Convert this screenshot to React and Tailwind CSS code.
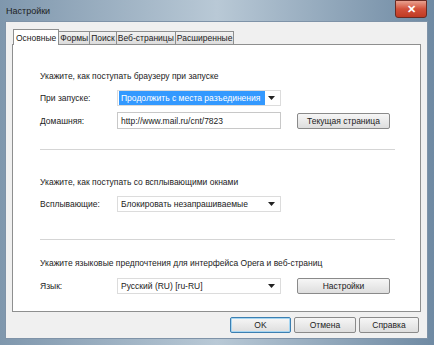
import React from 'react';

const font = { fontFamily: '"Liberation Sans", Arial, sans-serif' };

function Arrow() {
  return (
    <svg width="7" height="4" viewBox="0 0 7 4" className="shrink-0">
      <path d="M0 0 L7 0 L3.5 4 Z" fill="#222" />
    </svg>
  );
}

function Select({ value, highlight }) {
  return (
    <div className="flex h-[16px] w-[164px] items-center border border-[#dcdcdc] bg-white pl-[1px] pr-[5px]">
      <div
        className={
          highlight
            ? 'flex h-[14px] flex-1 items-center whitespace-nowrap bg-[#3399ff] pl-[2px] text-white'
            : 'flex h-[14px] flex-1 items-center whitespace-nowrap pl-[2px] text-[#222]'
        }
      >
        {value}
      </div>
      <div className="ml-[3px]">
        <Arrow />
      </div>
    </div>
  );
}

function Button({ children, w = 'w-[93px]', focused }) {
  return (
    <div
      className={
        'flex h-[16px] items-center justify-center whitespace-nowrap rounded-[2px] border bg-gradient-to-b from-[#f6f6f6] to-[#dedede] text-[#222] ' +
        w +
        (focused ? ' border-[#3c7fb1] shadow-[inset_0_0_0_1px_#a6d6f2]' : ' border-[#8a8a8a]')
      }
    >
      {children}
    </div>
  );
}

function Row({ label, children }) {
  return (
    <div className="flex items-center">
      <div className="w-[77px] whitespace-nowrap text-[#222]">{label}</div>
      {children}
    </div>
  );
}

export default function App() {
  const tabs = ['Основные', 'Формы', 'Поиск', 'Веб-страницы', 'Расширенные'];
  return (
    <div
      className="relative flex h-[345px] w-[434px] flex-col overflow-hidden whitespace-nowrap bg-gradient-to-r from-[#7f97ad] via-[#b9c9d6] to-[#6f8aa3] text-[8.5px] leading-[12px]"
      style={font}
    >
      <div className="flex h-[21px] items-center justify-between pl-[6px]">
        <span className="text-[9px] text-[#1e1e1e]">Настройки</span>
        <div className="mr-[7px] flex h-[18px] w-[32px] items-center justify-center self-start rounded-b-[3px] border border-[#6b2a22] bg-gradient-to-b from-[#e8a08f] via-[#d2503a] to-[#c03a22] text-[11px] font-bold text-white">
          ✕
        </div>
      </div>
      <div className="mx-[5px] mr-[6px] flex h-[318px] flex-col border border-[#7f93a8] bg-[#f0f0f0] px-[6px] pt-[8px]">
        <div className="flex h-[14px] items-end pl-[1px]">
          {tabs.map((t, i) =>
            i === 0 ? (
              <div
                key={t}
                className="relative z-10 -mb-[1px] flex h-[16px] items-center border border-b-0 border-[#8e8f8f] bg-white px-[2px] text-[#222]"
              >
                {t}
              </div>
            ) : (
              <div
                key={t}
                className="flex h-[13px] items-center border border-l-0 border-b-0 border-[#8e8f8f] bg-gradient-to-b from-[#f2f2f2] to-[#dcdcdc] px-[1px] text-[#222]"
              >
                {t}
              </div>
            )
          )}
        </div>
        <div className="flex h-[268px] flex-col border border-[#8e8f8f] bg-white pl-[27px] pr-[25px]">
          <div className="mt-[25px] text-[#222]">Укажите, как поступать браузеру при запуске</div>
          <div className="mt-[8px]">
            <Row label="При запуске:">
              <Select value="Продолжить с места разъединения" highlight />
            </Row>
          </div>
          <div className="mt-[6px]">
            <Row label="Домашняя:">
              <div className="flex h-[17px] w-[164px] items-center border border-[#c8c8c8] bg-white pl-[3px] text-[#222]">
                http://www.mail.ru/cnt/7823
              </div>
              <div className="ml-[16px]">
                <Button>Текущая страница</Button>
              </div>
            </Row>
          </div>
          <div className="mt-[20px] h-px bg-[#d5d5d5]" />
          <div className="mt-[26px] text-[#222]">Укажите, как поступать со всплывающими окнами</div>
          <div className="mt-[8px]">
            <Row label="Всплывающие:">
              <Select value="Блокировать незапрашиваемые" />
            </Row>
          </div>
          <div className="mt-[27px] h-px bg-[#d5d5d5]" />
          <div className="mt-[17px] text-[#222]">Укажите языковые предпочтения для интерфейса Opera и веб-страниц</div>
          <div className="mt-[9px]">
            <Row label="Язык:">
              <Select value="Русский (RU) [ru-RU]" />
              <div className="ml-[16px]">
                <Button>Настройки</Button>
              </div>
            </Row>
          </div>
        </div>
        <div className="mt-[5px] flex justify-end gap-[3px] pr-[2px]">
          <Button w="w-[61px]" focused>OK</Button>
          <Button w="w-[62px]">Отмена</Button>
          <Button w="w-[60px]">Справка</Button>
        </div>
      </div>
    </div>
  );
}
